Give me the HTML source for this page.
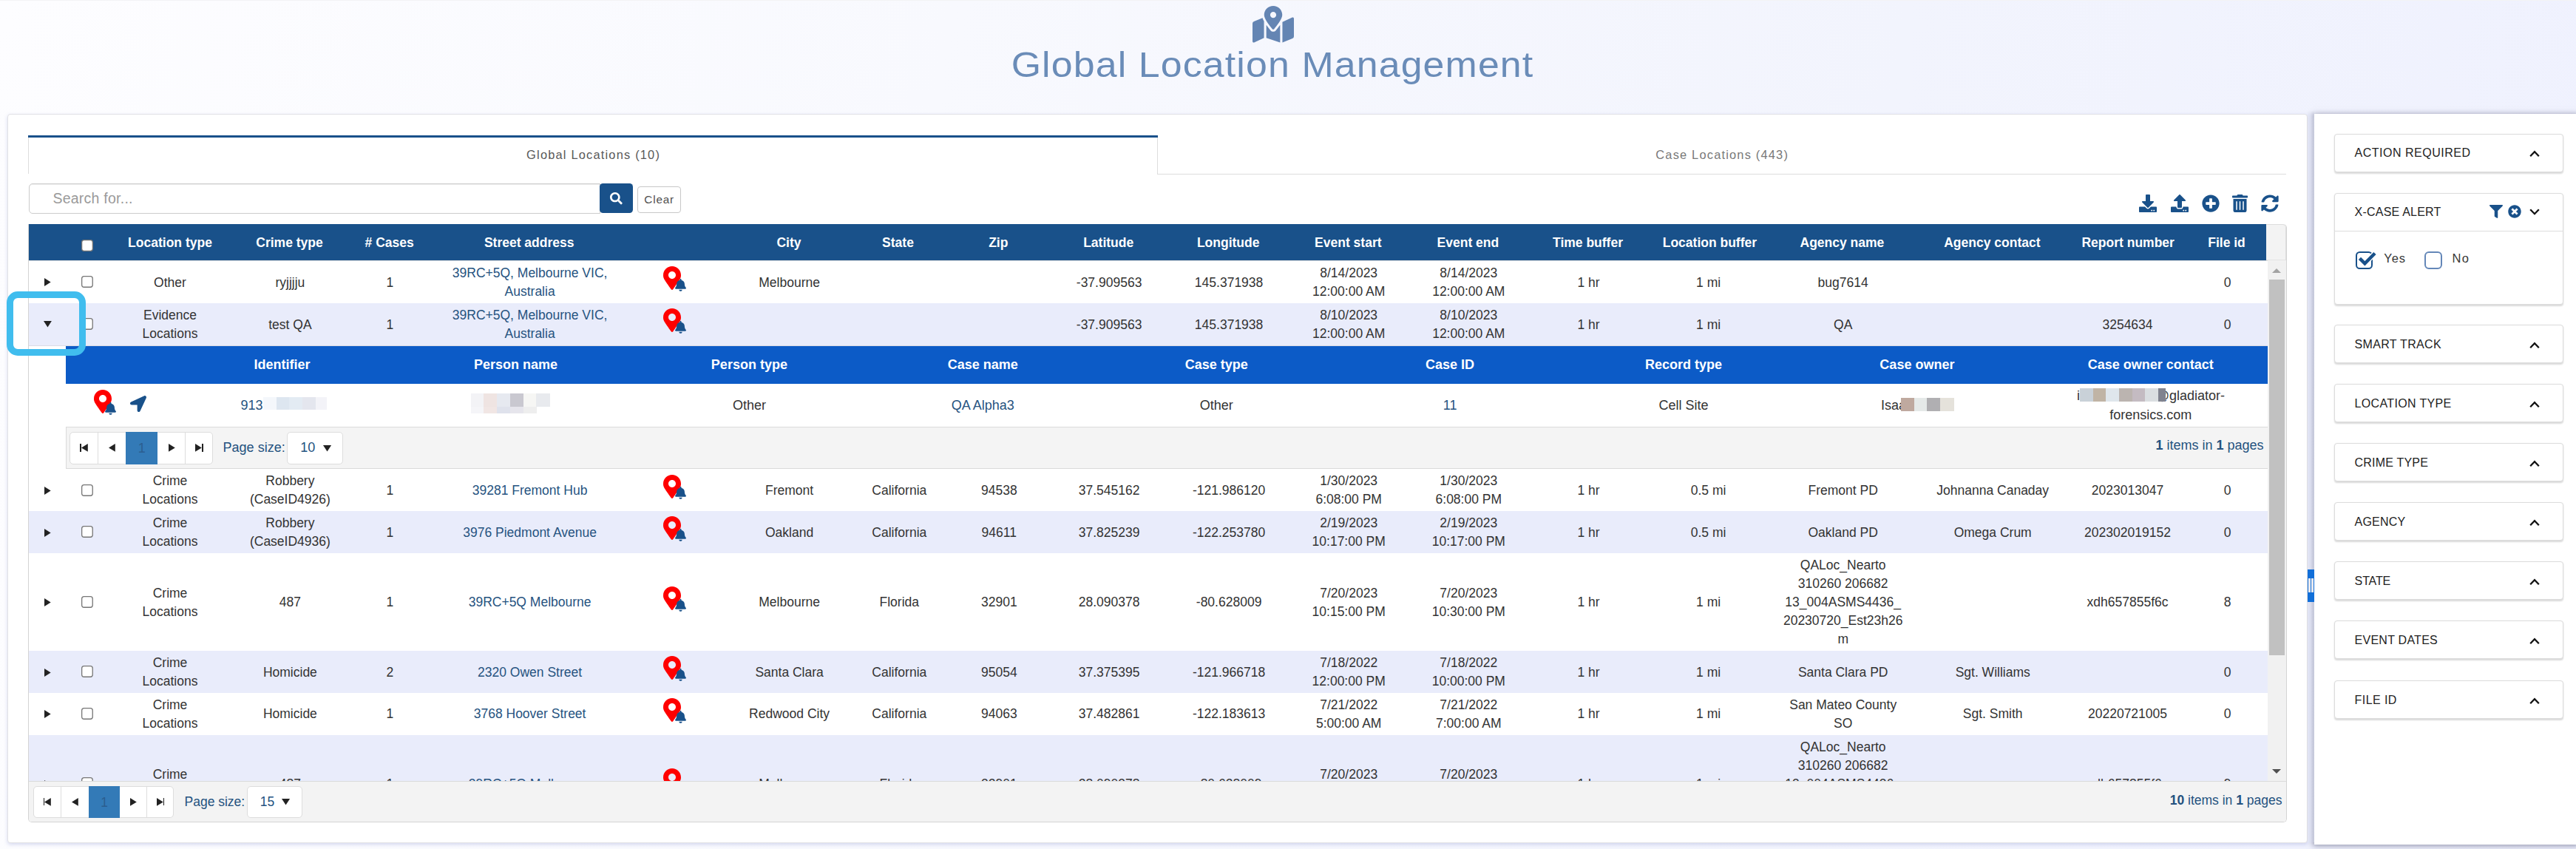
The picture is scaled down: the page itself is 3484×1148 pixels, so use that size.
<!DOCTYPE html>
<html><head><meta charset="utf-8"><title>Global Location Management</title>
<style>
*{box-sizing:border-box;margin:0;padding:0}
html,body{width:3484px;height:1148px;overflow:hidden}
body{position:relative;font-family:"Liberation Sans",sans-serif;font-size:17.5px;line-height:25px;color:#333;
 background:linear-gradient(100deg,#fdfdff 0%,#f8f9fe 35%,#f2f4fd 70%,#eff1fe 100%)}
.abs{position:absolute}
.ic{position:absolute;display:block;overflow:visible}
.c{position:absolute;transform:translate(-50%,-50%);white-space:nowrap;text-align:center;top:50%}
.row{position:absolute;left:0;width:100%;overflow:hidden}
.lk{color:#265380}
.s18{font-size:18px;line-height:26px}
.hd{color:#fff;font-weight:bold}
.mont{font-family:"Liberation Sans",sans-serif}
.cb{position:absolute;width:16px;height:16px;border:1.4px solid #767676;border-radius:3.5px;background:#fff}
.tri-r{position:absolute;width:0;height:0;border-top:5.5px solid transparent;border-bottom:5.5px solid transparent;border-left:8.8px solid #222}
.card{position:absolute;left:3157px;width:309.6px;background:#fff;border:1.3px solid #dcdcdc;border-radius:4px;box-shadow:0 1.5px 2px rgba(0,0,0,.15)}
.card .t{position:absolute;left:26.6px;font-size:16px;color:#222;white-space:nowrap}
.pg{position:absolute;background:#fff;border:1.3px solid #ddd;border-radius:5px}
.pb{position:absolute;top:0;height:100%;border-left:1.3px solid #ddd}
</style></head><body>

<div class="abs" style="left:0;top:0;width:3484px;height:1px;background:#f3f3f5"></div>
<svg class="ic" style="left:1694px;top:8px;width:56px;height:49.5px" viewBox="0 0 576 512" preserveAspectRatio="none" ><path fill="#6485b3" d="M288 0c-69.59 0-126 56.41-126 126 0 56.26 82.35 158.8 113.9 196.02 6.39 7.54 17.82 7.54 24.2 0C331.65 284.8 414 182.26 414 126 414 56.41 357.59 0 288 0zm0 168c-23.2 0-42-18.8-42-42s18.8-42 42-42 42 18.8 42 42-18.8 42-42 42zM20.12 215.95A32.006 32.006 0 0 0 0 245.66v250.32c0 11.32 11.43 19.06 21.94 14.86L160 448V214.92c-8.84-15.98-16.07-31.54-21.25-46.42L20.12 215.95zM288 359.67c-14.07 0-27.38-6.18-36.51-16.96-19.66-23.2-40.57-49.62-59.49-76.72v182l192 64V266c-18.92 27.09-39.82 53.52-59.49 76.72-9.13 10.77-22.44 16.95-36.51 16.95zm266.06-198.51L416 224v288l139.88-55.95A31.996 31.996 0 0 0 576 426.34V176.02c0-11.32-11.43-19.06-21.94-14.86z"/></svg>
<div class="abs mont" id="title" style="left:1021px;width:1400px;text-align:center;top:53px;font-size:48px;line-height:70px;color:#6a8cb8;letter-spacing:1.05px;transform:scaleX(1.08);white-space:nowrap">Global Location Management</div>
<div class="abs" style="left:10px;top:154px;width:3110.5px;height:986px;background:#fff;border:1.3px solid #e2e2e6;border-radius:4px;box-shadow:0 2px 5px rgba(120,130,200,.28)"></div>
<div class="abs" style="left:3130px;top:154px;width:360px;height:988px;background:#fff;box-shadow:-2px 1px 8px rgba(45,50,85,.55)"></div>
<div class="abs" style="left:3120.5px;top:150px;width:9.5px;height:989px;background:linear-gradient(90deg,#e2e5f5 0%,#dcdff0 40%,#c4c7d9 85%,#cbcee0 100%);-webkit-mask-image:linear-gradient(180deg,transparent 0,#000 9px)"></div>
<div class="abs" style="left:3121px;top:770px;width:9px;height:44px;background:#116fd9"></div>
<div class="abs" style="left:3122.4px;top:782px;width:2.3px;height:18.5px;background:#e9e9ef"></div>
<div class="abs" style="left:3126px;top:782px;width:2.5px;height:18.5px;background:#e9e9ef"></div>
<div class="abs" style="left:38px;top:183px;width:1528px;height:3px;background:#19518a"></div>
<div class="abs" style="left:38px;top:186px;width:1px;height:49px;background:#ddd"></div>
<div class="abs" style="left:1565px;top:186px;width:1px;height:50px;background:#ddd"></div>
<div class="abs" style="left:1565px;top:235px;width:1527px;height:1px;background:#ddd"></div>
<div class="abs mont" id="tab1" style="left:602px;width:400px;text-align:center;top:196.8px;font-size:16.4px;color:#585858;letter-spacing:1.2px;padding-left:1.2px">Global Locations (10)</div>
<div class="abs mont" id="tab2" style="left:2128px;width:400px;text-align:center;top:196.8px;font-size:16.4px;color:#787878;letter-spacing:1.2px;padding-left:2.4px">Case Locations (443)</div>
<div class="abs" style="left:38.5px;top:248px;width:773px;height:40.5px;border:1px solid #ccc;border-radius:5px 0 0 5px;background:#fff;box-shadow:inset 0 1px 1px rgba(0,0,0,.075)"></div>
<div class="abs mont" id="ph" style="left:71.4px;top:255.9px;font-size:19.5px;color:#9a9a9a;letter-spacing:.25px">Search for...</div>
<div class="abs" style="left:811px;top:248px;width:45px;height:40px;background:#19518a;border-radius:4.5px"></div>
<svg class="ic" style="left:824.7px;top:260px;width:16.8px;height:16.4px" viewBox="0 0 512 512" preserveAspectRatio="none" ><path fill="#fff" d="M505 442.7L405.3 343c-4.5-4.5-10.6-7-17-7H372c27.6-35.3 44-79.7 44-128C416 93.1 322.9 0 208 0S0 93.1 0 208s93.1 208 208 208c48.3 0 92.7-16.4 128-44v16.3c0 6.4 2.5 12.5 7 17l99.7 99.7c9.4 9.4 24.6 9.4 33.9 0l28.3-28.3c9.4-9.4 9.4-24.6.1-34zM208 336c-70.7 0-128-57.2-128-128 0-70.7 57.2-128 128-128 70.7 0 128 57.2 128 128 0 70.7-57.2 128-128 128z"/></svg>
<div class="abs" style="left:862px;top:252px;width:59px;height:36px;border:1px solid #c8c8c8;border-radius:4px;background:#fff"></div>
<div class="abs mont" id="clr" style="left:862px;width:58.5px;text-align:center;top:257.2px;font-size:15.3px;letter-spacing:.8px;padding-left:.8px;color:#505050">Clear</div>
<svg class="ic" style="left:2893.3px;top:263px;width:24px;height:24px" viewBox="0 0 512 512" preserveAspectRatio="none" ><path fill="#19518a" d="M216 0h80c13.3 0 24 10.7 24 24v168h87.7c17.8 0 26.7 21.5 14.1 34.1L269.7 378.3c-7.5 7.5-19.8 7.5-27.3 0L90.1 226.1c-12.6-12.6-3.7-34.1 14.1-34.1H192V24c0-13.3 10.7-24 24-24zm296 376v112c0 13.3-10.7 24-24 24H24c-13.3 0-24-10.7-24-24V376c0-13.3 10.7-24 24-24h146.7l49 49c20.1 20.1 52.5 20.1 72.6 0l49-49H488c13.3 0 24 10.7 24 24zm-124 88c0-11-9-20-20-20s-20 9-20 20 9 20 20 20 20-9 20-20zm64 0c0-11-9-20-20-20s-20 9-20 20 9 20 20 20 20-9 20-20z"/></svg>
<svg class="ic" style="left:2935.5px;top:263px;width:24px;height:24px" viewBox="0 0 512 512" preserveAspectRatio="none" ><path fill="#19518a" d="M296 384h-80c-13.3 0-24-10.7-24-24V192h-87.7c-17.8 0-26.7-21.5-14.1-34.1L242.3 5.7c7.5-7.5 19.8-7.5 27.3 0l152.2 152.2c12.6 12.6 3.7 34.1-14.1 34.1H320v168c0 13.3-10.7 24-24 24zm216-8v112c0 13.3-10.7 24-24 24H24c-13.3 0-24-10.7-24-24V376c0-13.3 10.7-24 24-24h136v8c0 30.9 25.1 56 56 56h80c30.9 0 56-25.1 56-56v-8h136c13.3 0 24 10.7 24 24zm-124 88c0-11-9-20-20-20s-20 9-20 20 9 20 20 20 20-9 20-20zm64 0c0-11-9-20-20-20s-20 9-20 20 9 20 20 20 20-9 20-20z"/></svg>
<svg class="ic" style="left:2977.5px;top:263px;width:24px;height:24px" viewBox="0 0 512 512" preserveAspectRatio="none" ><path fill="#19518a" d="M256 8C119 8 8 119 8 256s111 248 248 248 248-111 248-248S393 8 256 8zm144 276c0 6.6-5.4 12-12 12h-92v92c0 6.6-5.4 12-12 12h-56c-6.6 0-12-5.4-12-12v-92h-92c-6.6 0-12-5.4-12-12v-56c0-6.6 5.4-12 12-12h92v-92c0-6.6 5.4-12 12-12h56c6.6 0 12 5.4 12 12v92h92c6.6 0 12 5.4 12 12v56z"/></svg>
<svg class="ic" style="left:3019px;top:263px;width:21px;height:24px" viewBox="0 0 448 512" preserveAspectRatio="none" ><path fill="#19518a" d="M32 464a48 48 0 0 0 48 48h288a48 48 0 0 0 48-48V128H32zm272-256a16 16 0 0 1 32 0v224a16 16 0 0 1-32 0zm-96 0a16 16 0 0 1 32 0v224a16 16 0 0 1-32 0zm-96 0a16 16 0 0 1 32 0v224a16 16 0 0 1-32 0zM432 32H312l-9.4-18.7A24 24 0 0 0 281.1 0H166.8a23.72 23.72 0 0 0-21.4 13.3L136 32H16A16 16 0 0 0 0 48v32a16 16 0 0 0 16 16h416a16 16 0 0 0 16-16V48a16 16 0 0 0-16-16z"/></svg>
<svg class="ic" style="left:3058px;top:263px;width:24px;height:24px" viewBox="0 0 512 512" preserveAspectRatio="none" ><path fill="#19518a" d="M370.72 133.28C339.458 104.008 298.888 87.962 255.848 88c-77.458.068-144.328 53.178-162.791 126.85-1.344 5.363-6.122 9.15-11.651 9.15H24.103c-7.498 0-13.194-6.807-11.807-14.176C33.933 94.924 134.813 8 256 8c66.448 0 126.791 26.136 171.315 68.685L463.03 40.97C478.149 25.851 504 36.559 504 57.941V192c0 13.255-10.745 24-24 24H345.941c-21.382 0-32.09-25.851-16.971-40.971l41.75-41.749zM32 296h134.059c21.382 0 32.09 25.851 16.971 40.971l-41.75 41.75c31.262 29.273 71.835 45.319 114.876 45.28 77.418-.07 144.315-53.144 162.787-126.849 1.344-5.363 6.122-9.15 11.651-9.15h57.304c7.498 0 13.194 6.807 11.807 14.176C478.067 417.076 377.187 504 256 504c-66.448 0-126.791-26.136-171.315-68.685L48.97 471.03C33.851 486.149 8 475.441 8 454.059V320c0-13.255 10.745-24 24-24z"/></svg>
<div class="abs" id="grid" style="left:38px;top:302.5px;width:3055px;height:809px;border:1px solid #d4d4d4;border-top:none;border-radius:0 5px 5px 5px;background:#fff;overflow:hidden"></div>
<div class="abs" id="gridc" style="left:0;top:0;width:3484px;height:1056px;overflow:hidden">
<div class="row" style="left:39px;width:3026px;top:302.5px;height:49.5px;background:#19518a"></div>
<div class="abs" style="left:3065px;top:302.5px;width:27px;height:49.5px;background:#f3f3f3;border-radius:0 5px 0 0;border:1.3px solid #ddd;border-left:none;border-bottom:1.3px solid #e4e4e4"></div>
<div class="c hd" style="left:230px;top:327.6px">Location type</div>
<div class="c hd" style="left:391.5px;top:327.6px">Crime type</div>
<div class="c hd" style="left:526.7px;top:327.6px"># Cases</div>
<div class="c hd" style="left:715.7px;top:327.6px">Street address</div>
<div class="c hd" style="left:1067px;top:327.6px">City</div>
<div class="c hd" style="left:1214.5px;top:327.6px">State</div>
<div class="c hd" style="left:1350.3px;top:327.6px">Zip</div>
<div class="c hd" style="left:1499.2px;top:327.6px">Latitude</div>
<div class="c hd" style="left:1661.2px;top:327.6px">Longitude</div>
<div class="c hd" style="left:1823.3px;top:327.6px">Event start</div>
<div class="c hd" style="left:1985.4px;top:327.6px">Event end</div>
<div class="c hd" style="left:2147.5px;top:327.6px">Time buffer</div>
<div class="c hd" style="left:2312.4px;top:327.6px">Location buffer</div>
<div class="c hd" style="left:2491.4px;top:327.6px">Agency name</div>
<div class="c hd" style="left:2694.4px;top:327.6px">Agency contact</div>
<div class="c hd" style="left:2878.2px;top:327.6px">Report number</div>
<div class="c hd" style="left:3011.5px;top:327.6px">File id</div>
<svg class="ic" style="left:109.9px;top:323.6px;width:16px;height:16px" viewBox="0 0 16 16"><rect x="0.65" y="0.65" width="14.7" height="14.7" rx="3" fill="#fff" stroke="#767676" stroke-width="1.3"/></svg>
<div class="row" style="left:39px;width:3028px;top:352px;height:58.1px;background:#fff"></div><svg class="ic" style="left:59.8px;top:376.25000000000006px;width:8.7px;height:10.9px" viewBox="0 0 8.7 10.9"><polygon fill="#222" points="0,0 8.7,5.45 0,10.9"/></svg><svg class="ic" style="left:110.1px;top:372.85px;width:15.9px;height:15.9px" viewBox="0 0 15.9 15.9"><rect x="0.65" y="0.65" width="14.6" height="14.6" rx="3" fill="#fff" stroke="#767676" stroke-width="1.3"/></svg><div class="c" style="left:230px;top:381.65000000000003px">Other</div><div class="c" style="left:392.4px;top:381.65000000000003px">ryjjjju</div><div class="c" style="left:527.3000000000001px;top:381.65000000000003px">1</div><div class="c" style="left:716.6px;top:381.65000000000003px"><span class="lk">39RC+5Q, Melbourne VIC,<br>Australia</span></div><svg class="ic" style="left:897.2px;top:359.85px;width:24px;height:32px" viewBox="0 0 384 512" preserveAspectRatio="none" ><path fill="#ff0000" d="M172.268 501.67C26.97 291.031 0 269.413 0 192 0 85.961 85.961 0 192 0s192 85.961 192 192c0 77.413-26.97 99.031-172.268 309.67-9.535 13.774-29.93 13.773-39.464 0zM192 272c44.183 0 80-35.817 80-80s-35.817-80-80-80-80 35.817-80 80 35.817 80 80 80z"/></svg><svg class="ic" style="left:912.8000000000001px;top:376.75px;width:15px;height:16.8px" viewBox="0 0 448 512" preserveAspectRatio="none" ><path fill="#19518a" d="M224 512c35.32 0 63.97-28.65 63.97-64H160.03c0 35.35 28.65 64 63.97 64zm215.39-149.71c-19.32-20.76-55.47-51.99-55.47-154.29 0-77.7-54.48-139.9-127.94-155.16V32c0-17.67-14.32-32-31.98-32s-31.98 14.33-31.98 32v20.84C118.56 68.1 64.08 130.3 64.08 208c0 102.3-36.15 133.53-55.47 154.29-6 6.45-8.66 14.16-8.61 21.71.11 16.4 12.98 32 32.1 32h383.8c19.12 0 32-15.6 32.1-32 .05-7.55-2.61-15.27-8.61-21.71z"/></svg><div class="c" style="left:1067.6px;top:381.65000000000003px">Melbourne</div><div class="c" style="left:1500.1000000000001px;top:381.65000000000003px">-37.909563</div><div class="c" style="left:1662.1000000000001px;top:381.65000000000003px">145.371938</div><div class="c" style="left:1824.2px;top:381.65000000000003px">8/14/2023<br>12:00:00 AM</div><div class="c" style="left:1986.3000000000002px;top:381.65000000000003px">8/14/2023<br>12:00:00 AM</div><div class="c" style="left:2148.5px;top:381.65000000000003px">1 hr</div><div class="c" style="left:2310.6px;top:381.65000000000003px">1 mi</div><div class="c" style="left:2492.7000000000003px;top:381.65000000000003px">bug7614</div><div class="c" style="left:3012.7px;top:381.65000000000003px">0</div>
<div class="row" style="left:39px;width:3028px;top:410.1px;height:56.6px;background:#e9ecfb"></div><svg class="ic" style="left:58.7px;top:433.90000000000003px;width:10.9px;height:8.6px" viewBox="0 0 10.9 8.6"><polygon fill="#222" points="0,0 10.9,0 5.45,8.6"/></svg><svg class="ic" style="left:110.1px;top:430.20000000000005px;width:15.9px;height:15.9px" viewBox="0 0 15.9 15.9"><rect x="0.65" y="0.65" width="14.6" height="14.6" rx="3" fill="#fff" stroke="#767676" stroke-width="1.3"/></svg><div class="c" style="left:230px;top:439.00000000000006px">Evidence<br>Locations</div><div class="c" style="left:392.4px;top:439.00000000000006px">test QA</div><div class="c" style="left:527.3000000000001px;top:439.00000000000006px">1</div><div class="c" style="left:716.6px;top:439.00000000000006px"><span class="lk">39RC+5Q, Melbourne VIC,<br>Australia</span></div><svg class="ic" style="left:897.2px;top:417.20000000000005px;width:24px;height:32px" viewBox="0 0 384 512" preserveAspectRatio="none" ><path fill="#ff0000" d="M172.268 501.67C26.97 291.031 0 269.413 0 192 0 85.961 85.961 0 192 0s192 85.961 192 192c0 77.413-26.97 99.031-172.268 309.67-9.535 13.774-29.93 13.773-39.464 0zM192 272c44.183 0 80-35.817 80-80s-35.817-80-80-80-80 35.817-80 80 35.817 80 80 80z"/></svg><svg class="ic" style="left:912.8000000000001px;top:434.1px;width:15px;height:16.8px" viewBox="0 0 448 512" preserveAspectRatio="none" ><path fill="#19518a" d="M224 512c35.32 0 63.97-28.65 63.97-64H160.03c0 35.35 28.65 64 63.97 64zm215.39-149.71c-19.32-20.76-55.47-51.99-55.47-154.29 0-77.7-54.48-139.9-127.94-155.16V32c0-17.67-14.32-32-31.98-32s-31.98 14.33-31.98 32v20.84C118.56 68.1 64.08 130.3 64.08 208c0 102.3-36.15 133.53-55.47 154.29-6 6.45-8.66 14.16-8.61 21.71.11 16.4 12.98 32 32.1 32h383.8c19.12 0 32-15.6 32.1-32 .05-7.55-2.61-15.27-8.61-21.71z"/></svg><div class="c" style="left:1500.1000000000001px;top:439.00000000000006px">-37.909563</div><div class="c" style="left:1662.1000000000001px;top:439.00000000000006px">145.371938</div><div class="c" style="left:1824.2px;top:439.00000000000006px">8/10/2023<br>12:00:00 AM</div><div class="c" style="left:1986.3000000000002px;top:439.00000000000006px">8/10/2023<br>12:00:00 AM</div><div class="c" style="left:2148.5px;top:439.00000000000006px">1 hr</div><div class="c" style="left:2310.6px;top:439.00000000000006px">1 mi</div><div class="c" style="left:2492.7000000000003px;top:439.00000000000006px">QA</div><div class="c" style="left:2877.5px;top:439.00000000000006px">3254634</div><div class="c" style="left:3012.7px;top:439.00000000000006px">0</div>
<div class="row" style="left:39px;width:3028px;top:634.3px;height:56.8px;background:#fff"></div><svg class="ic" style="left:59.8px;top:657.9px;width:8.7px;height:10.9px" viewBox="0 0 8.7 10.9"><polygon fill="#222" points="0,0 8.7,5.45 0,10.9"/></svg><svg class="ic" style="left:110.1px;top:654.4999999999999px;width:15.9px;height:15.9px" viewBox="0 0 15.9 15.9"><rect x="0.65" y="0.65" width="14.6" height="14.6" rx="3" fill="#fff" stroke="#767676" stroke-width="1.3"/></svg><div class="c" style="left:230px;top:663.3px">Crime<br>Locations</div><div class="c" style="left:392.4px;top:663.3px">Robbery<br>(CaseID4926)</div><div class="c" style="left:527.3000000000001px;top:663.3px">1</div><div class="c" style="left:716.6px;top:663.3px"><span class="lk">39281 Fremont Hub</span></div><svg class="ic" style="left:897.2px;top:641.4999999999999px;width:24px;height:32px" viewBox="0 0 384 512" preserveAspectRatio="none" ><path fill="#ff0000" d="M172.268 501.67C26.97 291.031 0 269.413 0 192 0 85.961 85.961 0 192 0s192 85.961 192 192c0 77.413-26.97 99.031-172.268 309.67-9.535 13.774-29.93 13.773-39.464 0zM192 272c44.183 0 80-35.817 80-80s-35.817-80-80-80-80 35.817-80 80 35.817 80 80 80z"/></svg><svg class="ic" style="left:912.8000000000001px;top:658.3999999999999px;width:15px;height:16.8px" viewBox="0 0 448 512" preserveAspectRatio="none" ><path fill="#19518a" d="M224 512c35.32 0 63.97-28.65 63.97-64H160.03c0 35.35 28.65 64 63.97 64zm215.39-149.71c-19.32-20.76-55.47-51.99-55.47-154.29 0-77.7-54.48-139.9-127.94-155.16V32c0-17.67-14.32-32-31.98-32s-31.98 14.33-31.98 32v20.84C118.56 68.1 64.08 130.3 64.08 208c0 102.3-36.15 133.53-55.47 154.29-6 6.45-8.66 14.16-8.61 21.71.11 16.4 12.98 32 32.1 32h383.8c19.12 0 32-15.6 32.1-32 .05-7.55-2.61-15.27-8.61-21.71z"/></svg><div class="c" style="left:1067.6px;top:663.3px">Fremont</div><div class="c" style="left:1216.3px;top:663.3px">California</div><div class="c" style="left:1351.3px;top:663.3px">94538</div><div class="c" style="left:1500.1000000000001px;top:663.3px">37.545162</div><div class="c" style="left:1662.1000000000001px;top:663.3px">-121.986120</div><div class="c" style="left:1824.2px;top:663.3px">1/30/2023<br>6:08:00 PM</div><div class="c" style="left:1986.3000000000002px;top:663.3px">1/30/2023<br>6:08:00 PM</div><div class="c" style="left:2148.5px;top:663.3px">1 hr</div><div class="c" style="left:2310.6px;top:663.3px">0.5 mi</div><div class="c" style="left:2492.7000000000003px;top:663.3px">Fremont PD</div><div class="c" style="left:2695.2000000000003px;top:663.3px">Johnanna Canaday</div><div class="c" style="left:2877.5px;top:663.3px">2023013047</div><div class="c" style="left:3012.7px;top:663.3px">0</div>
<div class="row" style="left:39px;width:3028px;top:691px;height:56.7px;background:#e9ecfb"></div><svg class="ic" style="left:59.8px;top:714.5500000000001px;width:8.7px;height:10.9px" viewBox="0 0 8.7 10.9"><polygon fill="#222" points="0,0 8.7,5.45 0,10.9"/></svg><svg class="ic" style="left:110.1px;top:711.15px;width:15.9px;height:15.9px" viewBox="0 0 15.9 15.9"><rect x="0.65" y="0.65" width="14.6" height="14.6" rx="3" fill="#fff" stroke="#767676" stroke-width="1.3"/></svg><div class="c" style="left:230px;top:719.95px">Crime<br>Locations</div><div class="c" style="left:392.4px;top:719.95px">Robbery<br>(CaseID4936)</div><div class="c" style="left:527.3000000000001px;top:719.95px">1</div><div class="c" style="left:716.6px;top:719.95px"><span class="lk">3976 Piedmont Avenue</span></div><svg class="ic" style="left:897.2px;top:698.15px;width:24px;height:32px" viewBox="0 0 384 512" preserveAspectRatio="none" ><path fill="#ff0000" d="M172.268 501.67C26.97 291.031 0 269.413 0 192 0 85.961 85.961 0 192 0s192 85.961 192 192c0 77.413-26.97 99.031-172.268 309.67-9.535 13.774-29.93 13.773-39.464 0zM192 272c44.183 0 80-35.817 80-80s-35.817-80-80-80-80 35.817-80 80 35.817 80 80 80z"/></svg><svg class="ic" style="left:912.8000000000001px;top:715.05px;width:15px;height:16.8px" viewBox="0 0 448 512" preserveAspectRatio="none" ><path fill="#19518a" d="M224 512c35.32 0 63.97-28.65 63.97-64H160.03c0 35.35 28.65 64 63.97 64zm215.39-149.71c-19.32-20.76-55.47-51.99-55.47-154.29 0-77.7-54.48-139.9-127.94-155.16V32c0-17.67-14.32-32-31.98-32s-31.98 14.33-31.98 32v20.84C118.56 68.1 64.08 130.3 64.08 208c0 102.3-36.15 133.53-55.47 154.29-6 6.45-8.66 14.16-8.61 21.71.11 16.4 12.98 32 32.1 32h383.8c19.12 0 32-15.6 32.1-32 .05-7.55-2.61-15.27-8.61-21.71z"/></svg><div class="c" style="left:1067.6px;top:719.95px">Oakland</div><div class="c" style="left:1216.3px;top:719.95px">California</div><div class="c" style="left:1351.3px;top:719.95px">94611</div><div class="c" style="left:1500.1000000000001px;top:719.95px">37.825239</div><div class="c" style="left:1662.1000000000001px;top:719.95px">-122.253780</div><div class="c" style="left:1824.2px;top:719.95px">2/19/2023<br>10:17:00 PM</div><div class="c" style="left:1986.3000000000002px;top:719.95px">2/19/2023<br>10:17:00 PM</div><div class="c" style="left:2148.5px;top:719.95px">1 hr</div><div class="c" style="left:2310.6px;top:719.95px">0.5 mi</div><div class="c" style="left:2492.7000000000003px;top:719.95px">Oakland PD</div><div class="c" style="left:2695.2000000000003px;top:719.95px">Omega Crum</div><div class="c" style="left:2877.5px;top:719.95px">202302019152</div><div class="c" style="left:3012.7px;top:719.95px">0</div>
<div class="row" style="left:39px;width:3028px;top:747.7px;height:132.6px;background:#fff"></div><svg class="ic" style="left:59.8px;top:809.2px;width:8.7px;height:10.9px" viewBox="0 0 8.7 10.9"><polygon fill="#222" points="0,0 8.7,5.45 0,10.9"/></svg><svg class="ic" style="left:110.1px;top:805.8px;width:15.9px;height:15.9px" viewBox="0 0 15.9 15.9"><rect x="0.65" y="0.65" width="14.6" height="14.6" rx="3" fill="#fff" stroke="#767676" stroke-width="1.3"/></svg><div class="c" style="left:230px;top:814.6px">Crime<br>Locations</div><div class="c" style="left:392.4px;top:813.7px">487</div><div class="c" style="left:527.3000000000001px;top:813.7px">1</div><div class="c" style="left:716.6px;top:813.7px"><span class="lk">39RC+5Q Melbourne</span></div><svg class="ic" style="left:897.2px;top:792.8px;width:24px;height:32px" viewBox="0 0 384 512" preserveAspectRatio="none" ><path fill="#ff0000" d="M172.268 501.67C26.97 291.031 0 269.413 0 192 0 85.961 85.961 0 192 0s192 85.961 192 192c0 77.413-26.97 99.031-172.268 309.67-9.535 13.774-29.93 13.773-39.464 0zM192 272c44.183 0 80-35.817 80-80s-35.817-80-80-80-80 35.817-80 80 35.817 80 80 80z"/></svg><svg class="ic" style="left:912.8000000000001px;top:809.6999999999999px;width:15px;height:16.8px" viewBox="0 0 448 512" preserveAspectRatio="none" ><path fill="#19518a" d="M224 512c35.32 0 63.97-28.65 63.97-64H160.03c0 35.35 28.65 64 63.97 64zm215.39-149.71c-19.32-20.76-55.47-51.99-55.47-154.29 0-77.7-54.48-139.9-127.94-155.16V32c0-17.67-14.32-32-31.98-32s-31.98 14.33-31.98 32v20.84C118.56 68.1 64.08 130.3 64.08 208c0 102.3-36.15 133.53-55.47 154.29-6 6.45-8.66 14.16-8.61 21.71.11 16.4 12.98 32 32.1 32h383.8c19.12 0 32-15.6 32.1-32 .05-7.55-2.61-15.27-8.61-21.71z"/></svg><div class="c" style="left:1067.6px;top:813.7px">Melbourne</div><div class="c" style="left:1216.3px;top:813.7px">Florida</div><div class="c" style="left:1351.3px;top:813.7px">32901</div><div class="c" style="left:1500.1000000000001px;top:813.7px">28.090378</div><div class="c" style="left:1662.1000000000001px;top:813.7px">-80.628009</div><div class="c" style="left:1824.2px;top:814.6px">7/20/2023<br>10:15:00 PM</div><div class="c" style="left:1986.3000000000002px;top:814.6px">7/20/2023<br>10:30:00 PM</div><div class="c" style="left:2148.5px;top:813.7px">1 hr</div><div class="c" style="left:2310.6px;top:813.7px">1 mi</div><div class="c" style="left:2492.7000000000003px;top:813.7px">QALoc_Nearto<br>310260 206682<br>13_004ASMS4436_<br>20230720_Est23h26<br>m</div><div class="c" style="left:2877.5px;top:813.7px">xdh657855f6c</div><div class="c" style="left:3012.7px;top:813.7px">8</div>
<div class="row" style="left:39px;width:3028px;top:880.3px;height:56.3px;background:#e9ecfb"></div><svg class="ic" style="left:59.8px;top:903.65px;width:8.7px;height:10.9px" viewBox="0 0 8.7 10.9"><polygon fill="#222" points="0,0 8.7,5.45 0,10.9"/></svg><svg class="ic" style="left:110.1px;top:900.2499999999999px;width:15.9px;height:15.9px" viewBox="0 0 15.9 15.9"><rect x="0.65" y="0.65" width="14.6" height="14.6" rx="3" fill="#fff" stroke="#767676" stroke-width="1.3"/></svg><div class="c" style="left:230px;top:909.05px">Crime<br>Locations</div><div class="c" style="left:392.4px;top:909.05px">Homicide</div><div class="c" style="left:527.3000000000001px;top:909.05px">2</div><div class="c" style="left:716.6px;top:909.05px"><span class="lk">2320 Owen Street</span></div><svg class="ic" style="left:897.2px;top:887.2499999999999px;width:24px;height:32px" viewBox="0 0 384 512" preserveAspectRatio="none" ><path fill="#ff0000" d="M172.268 501.67C26.97 291.031 0 269.413 0 192 0 85.961 85.961 0 192 0s192 85.961 192 192c0 77.413-26.97 99.031-172.268 309.67-9.535 13.774-29.93 13.773-39.464 0zM192 272c44.183 0 80-35.817 80-80s-35.817-80-80-80-80 35.817-80 80 35.817 80 80 80z"/></svg><svg class="ic" style="left:912.8000000000001px;top:904.1499999999999px;width:15px;height:16.8px" viewBox="0 0 448 512" preserveAspectRatio="none" ><path fill="#19518a" d="M224 512c35.32 0 63.97-28.65 63.97-64H160.03c0 35.35 28.65 64 63.97 64zm215.39-149.71c-19.32-20.76-55.47-51.99-55.47-154.29 0-77.7-54.48-139.9-127.94-155.16V32c0-17.67-14.32-32-31.98-32s-31.98 14.33-31.98 32v20.84C118.56 68.1 64.08 130.3 64.08 208c0 102.3-36.15 133.53-55.47 154.29-6 6.45-8.66 14.16-8.61 21.71.11 16.4 12.98 32 32.1 32h383.8c19.12 0 32-15.6 32.1-32 .05-7.55-2.61-15.27-8.61-21.71z"/></svg><div class="c" style="left:1067.6px;top:909.05px">Santa Clara</div><div class="c" style="left:1216.3px;top:909.05px">California</div><div class="c" style="left:1351.3px;top:909.05px">95054</div><div class="c" style="left:1500.1000000000001px;top:909.05px">37.375395</div><div class="c" style="left:1662.1000000000001px;top:909.05px">-121.966718</div><div class="c" style="left:1824.2px;top:909.05px">7/18/2022<br>12:00:00 PM</div><div class="c" style="left:1986.3000000000002px;top:909.05px">7/18/2022<br>10:00:00 PM</div><div class="c" style="left:2148.5px;top:909.05px">1 hr</div><div class="c" style="left:2310.6px;top:909.05px">1 mi</div><div class="c" style="left:2492.7000000000003px;top:909.05px">Santa Clara PD</div><div class="c" style="left:2695.2000000000003px;top:909.05px">Sgt. Williams</div><div class="c" style="left:3012.7px;top:909.05px">0</div>
<div class="row" style="left:39px;width:3028px;top:936.6px;height:57.1px;background:#fff"></div><svg class="ic" style="left:59.8px;top:960.35px;width:8.7px;height:10.9px" viewBox="0 0 8.7 10.9"><polygon fill="#222" points="0,0 8.7,5.45 0,10.9"/></svg><svg class="ic" style="left:110.1px;top:956.9499999999999px;width:15.9px;height:15.9px" viewBox="0 0 15.9 15.9"><rect x="0.65" y="0.65" width="14.6" height="14.6" rx="3" fill="#fff" stroke="#767676" stroke-width="1.3"/></svg><div class="c" style="left:230px;top:965.75px">Crime<br>Locations</div><div class="c" style="left:392.4px;top:964.75px">Homicide</div><div class="c" style="left:527.3000000000001px;top:964.75px">1</div><div class="c" style="left:716.6px;top:964.75px"><span class="lk">3768 Hoover Street</span></div><svg class="ic" style="left:897.2px;top:943.9499999999999px;width:24px;height:32px" viewBox="0 0 384 512" preserveAspectRatio="none" ><path fill="#ff0000" d="M172.268 501.67C26.97 291.031 0 269.413 0 192 0 85.961 85.961 0 192 0s192 85.961 192 192c0 77.413-26.97 99.031-172.268 309.67-9.535 13.774-29.93 13.773-39.464 0zM192 272c44.183 0 80-35.817 80-80s-35.817-80-80-80-80 35.817-80 80 35.817 80 80 80z"/></svg><svg class="ic" style="left:912.8000000000001px;top:960.8499999999999px;width:15px;height:16.8px" viewBox="0 0 448 512" preserveAspectRatio="none" ><path fill="#19518a" d="M224 512c35.32 0 63.97-28.65 63.97-64H160.03c0 35.35 28.65 64 63.97 64zm215.39-149.71c-19.32-20.76-55.47-51.99-55.47-154.29 0-77.7-54.48-139.9-127.94-155.16V32c0-17.67-14.32-32-31.98-32s-31.98 14.33-31.98 32v20.84C118.56 68.1 64.08 130.3 64.08 208c0 102.3-36.15 133.53-55.47 154.29-6 6.45-8.66 14.16-8.61 21.71.11 16.4 12.98 32 32.1 32h383.8c19.12 0 32-15.6 32.1-32 .05-7.55-2.61-15.27-8.61-21.71z"/></svg><div class="c" style="left:1067.6px;top:964.75px">Redwood City</div><div class="c" style="left:1216.3px;top:964.75px">California</div><div class="c" style="left:1351.3px;top:964.75px">94063</div><div class="c" style="left:1500.1000000000001px;top:964.75px">37.482861</div><div class="c" style="left:1662.1000000000001px;top:964.75px">-122.183613</div><div class="c" style="left:1824.2px;top:965.75px">7/21/2022<br>5:00:00 AM</div><div class="c" style="left:1986.3000000000002px;top:965.75px">7/21/2022<br>7:00:00 AM</div><div class="c" style="left:2148.5px;top:964.75px">1 hr</div><div class="c" style="left:2310.6px;top:964.75px">1 mi</div><div class="c" style="left:2492.7000000000003px;top:965.75px">San Mateo County<br>SO</div><div class="c" style="left:2695.2000000000003px;top:964.75px">Sgt. Smith</div><div class="c" style="left:2877.5px;top:964.75px">20220721005</div><div class="c" style="left:3012.7px;top:964.75px">0</div>
<div class="row" style="left:39px;width:3028px;top:993.7px;height:132.6px;background:#e9ecfb"></div><svg class="ic" style="left:59.8px;top:1055.1999999999998px;width:8.7px;height:10.9px" viewBox="0 0 8.7 10.9"><polygon fill="#222" points="0,0 8.7,5.45 0,10.9"/></svg><svg class="ic" style="left:110.1px;top:1050.8px;width:15.9px;height:15.9px" viewBox="0 0 15.9 15.9"><rect x="0.65" y="0.65" width="14.6" height="14.6" rx="3" fill="#fff" stroke="#767676" stroke-width="1.3"/></svg><div class="c" style="left:230px;top:1059.6px">Crime<br>Locations</div><div class="c" style="left:392.4px;top:1059.6999999999998px">487</div><div class="c" style="left:527.3000000000001px;top:1059.6999999999998px">1</div><div class="c" style="left:716.6px;top:1059.6999999999998px"><span class="lk">39RC+5Q Melbourne</span></div><svg class="ic" style="left:897.2px;top:1038.8px;width:24px;height:32px" viewBox="0 0 384 512" preserveAspectRatio="none" ><path fill="#ff0000" d="M172.268 501.67C26.97 291.031 0 269.413 0 192 0 85.961 85.961 0 192 0s192 85.961 192 192c0 77.413-26.97 99.031-172.268 309.67-9.535 13.774-29.93 13.773-39.464 0zM192 272c44.183 0 80-35.817 80-80s-35.817-80-80-80-80 35.817-80 80 35.817 80 80 80z"/></svg><svg class="ic" style="left:912.8000000000001px;top:1055.7px;width:15px;height:16.8px" viewBox="0 0 448 512" preserveAspectRatio="none" ><path fill="#19518a" d="M224 512c35.32 0 63.97-28.65 63.97-64H160.03c0 35.35 28.65 64 63.97 64zm215.39-149.71c-19.32-20.76-55.47-51.99-55.47-154.29 0-77.7-54.48-139.9-127.94-155.16V32c0-17.67-14.32-32-31.98-32s-31.98 14.33-31.98 32v20.84C118.56 68.1 64.08 130.3 64.08 208c0 102.3-36.15 133.53-55.47 154.29-6 6.45-8.66 14.16-8.61 21.71.11 16.4 12.98 32 32.1 32h383.8c19.12 0 32-15.6 32.1-32 .05-7.55-2.61-15.27-8.61-21.71z"/></svg><div class="c" style="left:1067.6px;top:1059.6999999999998px">Melbourne</div><div class="c" style="left:1216.3px;top:1059.6999999999998px">Florida</div><div class="c" style="left:1351.3px;top:1059.6999999999998px">32901</div><div class="c" style="left:1500.1000000000001px;top:1059.6999999999998px">28.090378</div><div class="c" style="left:1662.1000000000001px;top:1059.6999999999998px">-80.628009</div><div class="c" style="left:1824.2px;top:1059.6px">7/20/2023<br>10:15:00 PM</div><div class="c" style="left:1986.3000000000002px;top:1059.6px">7/20/2023<br>10:30:00 PM</div><div class="c" style="left:2148.5px;top:1059.6999999999998px">1 hr</div><div class="c" style="left:2310.6px;top:1059.6999999999998px">1 mi</div><div class="c" style="left:2492.7000000000003px;top:1059.6999999999998px">QALoc_Nearto<br>310260 206682<br>13_004ASMS4436_<br>20230720_Est23h26<br>m</div><div class="c" style="left:2877.5px;top:1059.6999999999998px">xdh657855f6c</div><div class="c" style="left:3012.7px;top:1059.6999999999998px">9</div>
<div class="abs" style="left:39px;top:467px;width:3028px;height:1px;background:#dcdce4"></div>
<div class="abs" style="left:39px;top:352px;width:3028px;height:1px;background:#dfdfdf"></div>
<div class="row" style="left:88.6px;width:2978.4px;top:467.7px;height:51.1px;background:#0c5bc7"></div>
<div class="c hd s18" style="left:381.6px;top:493.4px">Identifier</div>
<div class="c hd s18" style="left:697.5px;top:493.4px">Person name</div>
<div class="c hd s18" style="left:1013.4px;top:493.4px">Person type</div>
<div class="c hd s18" style="left:1329.3px;top:493.4px">Case name</div>
<div class="c hd s18" style="left:1645.1999999999998px;top:493.4px">Case type</div>
<div class="c hd s18" style="left:1961.1px;top:493.4px">Case ID</div>
<div class="c hd s18" style="left:2277.0px;top:493.4px">Record type</div>
<div class="c hd s18" style="left:2592.8999999999996px;top:493.4px">Case owner</div>
<div class="c hd s18" style="left:2908.7999999999997px;top:493.4px">Case owner contact</div>
<div class="row" style="left:88.6px;width:2978.4px;top:518.8px;height:58.6px;background:#fff"></div>
<svg class="ic" style="left:126.7px;top:527px;width:24px;height:32px" viewBox="0 0 384 512" preserveAspectRatio="none" ><path fill="#ff0000" d="M172.268 501.67C26.97 291.031 0 269.413 0 192 0 85.961 85.961 0 192 0s192 85.961 192 192c0 77.413-26.97 99.031-172.268 309.67-9.535 13.774-29.93 13.773-39.464 0zM192 272c44.183 0 80-35.817 80-80s-35.817-80-80-80-80 35.817-80 80 35.817 80 80 80z"/></svg><svg class="ic" style="left:142.3px;top:543.9px;width:15px;height:16.8px" viewBox="0 0 448 512" preserveAspectRatio="none" ><path fill="#19518a" d="M224 512c35.32 0 63.97-28.65 63.97-64H160.03c0 35.35 28.65 64 63.97 64zm215.39-149.71c-19.32-20.76-55.47-51.99-55.47-154.29 0-77.7-54.48-139.9-127.94-155.16V32c0-17.67-14.32-32-31.98-32s-31.98 14.33-31.98 32v20.84C118.56 68.1 64.08 130.3 64.08 208c0 102.3-36.15 133.53-55.47 154.29-6 6.45-8.66 14.16-8.61 21.71.11 16.4 12.98 32 32.1 32h383.8c19.12 0 32-15.6 32.1-32 .05-7.55-2.61-15.27-8.61-21.71z"/></svg>
<svg class="ic" style="left:176px;top:535px;width:22px;height:22px" viewBox="0 0 512 512" preserveAspectRatio="none" ><path fill="#19518a" d="M444.52 3.52L28.74 195.42c-47.97 22.39-31.98 92.75 19.19 92.75h175.91v175.91c0 51.17 70.36 67.17 92.75 19.19l191.9-415.78c15.99-38.39-25.59-79.97-63.97-63.97z"/></svg>
<div class="abs lk s18" style="left:325.6px;top:535.3px">9131</div>
<div class="abs" style="left:356px;top:537px;width:18.5px;height:17px;background:#f4f7fb"></div><div class="abs" style="left:374px;top:537px;width:17.5px;height:17px;background:#dde6f0"></div><div class="abs" style="left:391px;top:537px;width:18.5px;height:17px;background:#e3ebf3"></div><div class="abs" style="left:409px;top:537px;width:18.5px;height:17px;background:#e4e6ee"></div><div class="abs" style="left:427px;top:537px;width:14.5px;height:17px;background:#f3f3f8"></div>
<div class="abs" style="left:637px;top:532px;width:17.5px;height:18px;background:#f3f3f6"></div><div class="abs" style="left:654px;top:532px;width:18.5px;height:18px;background:#efe4e2"></div><div class="abs" style="left:672px;top:532px;width:18.5px;height:18px;background:#e6e9f0"></div><div class="abs" style="left:690px;top:532px;width:18.5px;height:18px;background:#c9c8d0"></div><div class="abs" style="left:708px;top:532px;width:17.5px;height:18px;background:#f6f6f4"></div><div class="abs" style="left:725px;top:532px;width:18.5px;height:18px;background:#e8eaee"></div>
<div class="abs" style="left:637px;top:550px;width:17.5px;height:9px;background:#f5f5f8"></div><div class="abs" style="left:654px;top:550px;width:18.5px;height:9px;background:#f1e6e4"></div><div class="abs" style="left:672px;top:550px;width:18.5px;height:9px;background:#dfe2ec"></div><div class="abs" style="left:690px;top:550px;width:18.5px;height:9px;background:#e6e5ec"></div><div class="abs" style="left:708px;top:550px;width:17.5px;height:9px;background:#eeeeee"></div>
<div class="c s18" style="left:1013.4px;top:548.3px">Other</div>
<div class="c lk s18" style="left:1329.3px;top:548.3px">QA Alpha3</div>
<div class="c s18" style="left:1645.1999999999998px;top:548.3px">Other</div>
<div class="c lk s18" style="left:1961.1px;top:548.3px">11</div>
<div class="c s18" style="left:2277.0px;top:548.3px">Cell Site</div>
<div class="abs s18" style="left:2544px;top:535.3px">Isaa</div>
<div class="abs" style="left:2571px;top:538px;width:18.5px;height:18px;background:#bfa99f"></div><div class="abs" style="left:2589px;top:538px;width:17.5px;height:18px;background:#e5e9e8"></div><div class="abs" style="left:2606px;top:538px;width:18.5px;height:18px;background:#b0afb2"></div><div class="abs" style="left:2624px;top:538px;width:18.5px;height:18px;background:#e5e2db"></div>
<div class="abs s18" style="left:2808.9px;top:521.7px">i</div>
<div class="abs s18" style="left:2915.7px;top:521.7px">@gladiator-</div>
<div class="abs" style="left:2813px;top:525px;width:18.5px;height:18px;background:#c9d1d8"></div><div class="abs" style="left:2831px;top:525px;width:17.5px;height:18px;background:#c0b4a5"></div><div class="abs" style="left:2848px;top:525px;width:18.5px;height:18px;background:#dfe6ec"></div><div class="abs" style="left:2866px;top:525px;width:18.5px;height:18px;background:#bbb4b0"></div><div class="abs" style="left:2884px;top:525px;width:17.5px;height:18px;background:#c4bbc2"></div><div class="abs" style="left:2901px;top:525px;width:18.5px;height:18px;background:#dadee1"></div><div class="abs" style="left:2919px;top:525px;width:9.5px;height:18px;background:#80838f"></div>
<div class="abs s18" style="left:2808.7999999999997px;width:200px;text-align:center;top:547.8px">forensics.com</div>
<div class="row" style="left:88.6px;width:2978.4px;top:577px;height:57.4px;background:#f4f4f4;border-top:1px solid #dadada;border-bottom:1px solid #dadada;border-left:1px solid #dadada"></div>
<div class="pg" style="left:94.3px;top:584.2px;width:193.5px;height:43.4px"></div><div class="abs" style="left:108.1px;top:600.0000000000001px;width:1.7px;height:10.8px;background:#222"></div><svg class="ic" style="left:109.7px;top:600.0000000000001px;width:8.8px;height:10.8px" viewBox="0 0 8.8 10.8"><polygon fill="#222" points="8.8,0 0,5.4 8.8,10.8"/></svg><div class="abs" style="left:131.70000000000002px;top:585.2px;width:1.3px;height:41.4px;background:#ddd"></div><svg class="ic" style="left:147.25px;top:600.0000000000001px;width:8.8px;height:10.8px" viewBox="0 0 8.8 10.8"><polygon fill="#222" points="8.8,0 0,5.4 8.8,10.8"/></svg><div class="abs" style="left:170.0px;top:584.2px;width:42.9px;height:43.4px;background:#337ab7"></div><div class="c" style="left:191.75px;top:606.4000000000001px;color:#2b5e90;font-size:18px">1</div><svg class="ic" style="left:227.50000000000003px;top:600.0000000000001px;width:8.8px;height:10.8px" viewBox="0 0 8.8 10.8"><polygon fill="#222" points="0,0 8.8,5.4 0,10.8"/></svg><div class="abs" style="left:249.9px;top:585.2px;width:1.3px;height:41.4px;background:#ddd"></div><svg class="ic" style="left:264.25px;top:600.0000000000001px;width:8.8px;height:10.8px" viewBox="0 0 8.8 10.8"><polygon fill="#222" points="0,0 8.8,5.4 0,10.8"/></svg><div class="abs" style="left:273.04999999999995px;top:600.0000000000001px;width:1.7px;height:10.8px;background:#222"></div><div class="abs" style="left:301.6px;top:592.8000000000002px;color:#24527f;white-space:nowrap;font-size:18px">Page size:</div><div class="pg" style="left:388.2px;top:584.2px;width:75.4px;height:43.4px"></div><div class="abs" style="left:406.2px;top:592.8000000000002px;color:#24527f;font-size:18px">10</div><svg class="ic" style="left:436.7px;top:601.7px;width:11.1px;height:8.6px" viewBox="0 0 11.1 8.6"><polygon fill="#222" points="0,0 11.1,0 5.55,8.6"/></svg><div class="abs" style="right:422.5px;top:590.0000000000001px;color:#24527f;white-space:nowrap;font-size:18px"><b>1</b> items in <b>1</b> pages</div>
<div class="abs" style="left:3067px;top:352px;width:25px;height:705px;background:#f1f1f1"></div>
<div class="abs" style="left:3069.3px;top:378.3px;width:20.4px;height:507.3px;background:#c1c1c1"></div>
<div class="abs" style="left:3073.4px;top:363px;width:0;height:0;border-left:6px solid transparent;border-right:6px solid transparent;border-bottom:6px solid #a3a3a3"></div>
<div class="abs" style="left:3073.4px;top:1040px;width:0;height:0;border-left:6px solid transparent;border-right:6px solid transparent;border-top:6px solid #505050"></div>
</div>
<div class="abs" style="left:39px;top:1056px;width:3053px;height:55px;background:#f3f3f3;border-top:1px solid #dadada;border-radius:0 0 4px 4px"></div>
<div class="pg" style="left:45.4px;top:1063.2px;width:189.8px;height:42.5px"></div><div class="abs" style="left:58.75px;top:1078.55px;width:1.7px;height:10.8px;background:#222"></div><svg class="ic" style="left:60.35px;top:1078.55px;width:8.8px;height:10.8px" viewBox="0 0 8.8 10.8"><polygon fill="#222" points="8.8,0 0,5.4 8.8,10.8"/></svg><div class="abs" style="left:81.9px;top:1064.2px;width:1.3px;height:40.5px;background:#ddd"></div><svg class="ic" style="left:97.14999999999999px;top:1078.55px;width:8.8px;height:10.8px" viewBox="0 0 8.8 10.8"><polygon fill="#222" points="8.8,0 0,5.4 8.8,10.8"/></svg><div class="abs" style="left:119.6px;top:1063.2px;width:42.5px;height:42.5px;background:#337ab7"></div><div class="c" style="left:141.15px;top:1084.95px;color:#2b5e90;font-size:17.5px">1</div><svg class="ic" style="left:176.15px;top:1078.55px;width:8.8px;height:10.8px" viewBox="0 0 8.8 10.8"><polygon fill="#222" points="0,0 8.8,5.4 0,10.8"/></svg><div class="abs" style="left:198.0px;top:1064.2px;width:1.3px;height:40.5px;background:#ddd"></div><svg class="ic" style="left:212.0px;top:1078.55px;width:8.8px;height:10.8px" viewBox="0 0 8.8 10.8"><polygon fill="#222" points="0,0 8.8,5.4 0,10.8"/></svg><div class="abs" style="left:220.8px;top:1078.55px;width:1.7px;height:10.8px;background:#222"></div><div class="abs" style="left:249.5px;top:1072.15px;color:#24527f;white-space:nowrap;font-size:17.5px">Page size:</div><div class="pg" style="left:334.3px;top:1063.2px;width:74.3px;height:42.5px"></div><div class="abs" style="left:351.8px;top:1072.15px;color:#24527f;font-size:17.5px">15</div><svg class="ic" style="left:380.7px;top:1080.25px;width:11.1px;height:8.6px" viewBox="0 0 11.1 8.6"><polygon fill="#222" points="0,0 11.1,0 5.55,8.6"/></svg><div class="abs" style="right:397.5px;top:1069.95px;color:#24527f;white-space:nowrap;font-size:17.5px"><b>10</b> items in <b>1</b> pages</div>
<div class="abs" style="left:8.9px;top:393.9px;width:107.4px;height:87.2px;border:9px solid #40bdee;border-radius:15px"></div>
<div class="card" style="top:181px;height:52px"><div class="t mont" style="top:12.4px;letter-spacing:0.51px">ACTION REQUIRED</div></div><svg class="ic" style="left:3421px;top:203.3px;width:14px;height:10px" viewBox="0 0 14 10"><polyline points="1.2,8.2 7,2.2 12.8,8.2" fill="none" stroke="#111" stroke-width="2.3"/></svg>
<div class="card" style="top:261px;height:151px"><div class="t mont" style="top:12.4px;letter-spacing:0.215px">X-CASE ALERT</div></div><svg class="ic" style="left:3421px;top:281px;width:14px;height:10px" viewBox="0 0 14 10"><polyline points="1.2,2.2 7,8.2 12.8,2.2" fill="none" stroke="#111" stroke-width="2.3"/></svg>
<div class="abs" style="left:3158px;top:312px;width:308px;height:1px;background:#ddd"></div>
<svg class="ic" style="left:3366.6px;top:277.2px;width:18px;height:18px" viewBox="0 0 512 512" preserveAspectRatio="none" ><path fill="#19518a" d="M487.976 0H24.028C2.71 0-8.047 25.866 7.058 40.971L192 225.941V432c0 7.831 3.821 15.17 10.237 19.662l80 55.98C298.02 518.69 320 507.493 320 487.98V225.941l184.947-184.97C520.021 25.896 509.338 0 487.976 0z"/></svg>
<svg class="ic" style="left:3392px;top:277.2px;width:18px;height:18px" viewBox="0 0 512 512" preserveAspectRatio="none" ><path fill="#19518a" d="M256 8C119 8 8 119 8 256s111 248 248 248 248-111 248-248S393 8 256 8zm121.6 313.1c4.7 4.7 4.7 12.3 0 17L338 377.6c-4.7 4.7-12.3 4.7-17 0L256 312l-65.1 65.6c-4.7 4.7-12.3 4.7-17 0L134.4 338c-4.7-4.7-4.7-12.3 0-17l65.6-65-65.6-65.1c-4.7-4.7-4.7-12.3 0-17l39.6-39.6c4.7-4.7 12.3-4.7 17 0l65 65.7 65.1-65.6c4.7-4.7 12.3-4.7 17 0l39.6 39.6c4.7 4.7 4.7 12.3 0 17L312 256l65.6 65.1z"/></svg>
<div class="abs" style="left:3185.9px;top:340.1px;width:23.2px;height:23.6px;border:2px solid #19518a;border-radius:5.5px;background:#fff"></div>
<svg class="ic" style="left:3186px;top:338px;width:30px;height:26px" viewBox="0 0 30 26"><polyline points="5.46,11.32 12.4,18.29 25.97,4.5" fill="none" stroke="#fff" stroke-width="7.2"/><polyline points="5.46,11.32 12.4,18.29 25.97,4.5" fill="none" stroke="#19518a" stroke-width="4.6"/></svg>
<div class="abs mont" style="left:3224.2px;top:337.3px;font-size:16.5px;letter-spacing:1px;color:#383838">Yes</div>
<div class="abs" style="left:3279.2px;top:340.1px;width:23.9px;height:23.6px;border:2.2px solid #6487b8;border-radius:6px;background:#fff"></div>
<div class="abs mont" style="left:3316.6px;top:337.3px;font-size:16.5px;letter-spacing:1.3px;color:#383838">No</div>
<div class="card" style="top:439px;height:52px"><div class="t mont" style="top:12.8px;letter-spacing:0.317px">SMART TRACK</div></div><svg class="ic" style="left:3421px;top:461.8px;width:14px;height:10px" viewBox="0 0 14 10"><polyline points="1.2,8.2 7,2.2 12.8,8.2" fill="none" stroke="#111" stroke-width="2.3"/></svg>
<div class="card" style="top:519px;height:52px"><div class="t mont" style="top:12.8px;letter-spacing:0.343px">LOCATION TYPE</div></div><svg class="ic" style="left:3421px;top:541.8px;width:14px;height:10px" viewBox="0 0 14 10"><polyline points="1.2,8.2 7,2.2 12.8,8.2" fill="none" stroke="#111" stroke-width="2.3"/></svg>
<div class="card" style="top:599px;height:52px"><div class="t mont" style="top:12.8px;letter-spacing:0.19px">CRIME TYPE</div></div><svg class="ic" style="left:3421px;top:621.8px;width:14px;height:10px" viewBox="0 0 14 10"><polyline points="1.2,8.2 7,2.2 12.8,8.2" fill="none" stroke="#111" stroke-width="2.3"/></svg>
<div class="card" style="top:679px;height:52px"><div class="t mont" style="top:12.8px;letter-spacing:0.204px">AGENCY</div></div><svg class="ic" style="left:3421px;top:701.8px;width:14px;height:10px" viewBox="0 0 14 10"><polyline points="1.2,8.2 7,2.2 12.8,8.2" fill="none" stroke="#111" stroke-width="2.3"/></svg>
<div class="card" style="top:759px;height:52px"><div class="t mont" style="top:12.8px;letter-spacing:-0.139px">STATE</div></div><svg class="ic" style="left:3421px;top:781.8px;width:14px;height:10px" viewBox="0 0 14 10"><polyline points="1.2,8.2 7,2.2 12.8,8.2" fill="none" stroke="#111" stroke-width="2.3"/></svg>
<div class="card" style="top:839px;height:52px"><div class="t mont" style="top:12.8px;letter-spacing:0.249px">EVENT DATES</div></div><svg class="ic" style="left:3421px;top:861.8px;width:14px;height:10px" viewBox="0 0 14 10"><polyline points="1.2,8.2 7,2.2 12.8,8.2" fill="none" stroke="#111" stroke-width="2.3"/></svg>
<div class="card" style="top:920px;height:52px"><div class="t mont" style="top:12.8px;letter-spacing:0.422px">FILE ID</div></div><svg class="ic" style="left:3421px;top:942.8px;width:14px;height:10px" viewBox="0 0 14 10"><polyline points="1.2,8.2 7,2.2 12.8,8.2" fill="none" stroke="#111" stroke-width="2.3"/></svg>
</body></html>
